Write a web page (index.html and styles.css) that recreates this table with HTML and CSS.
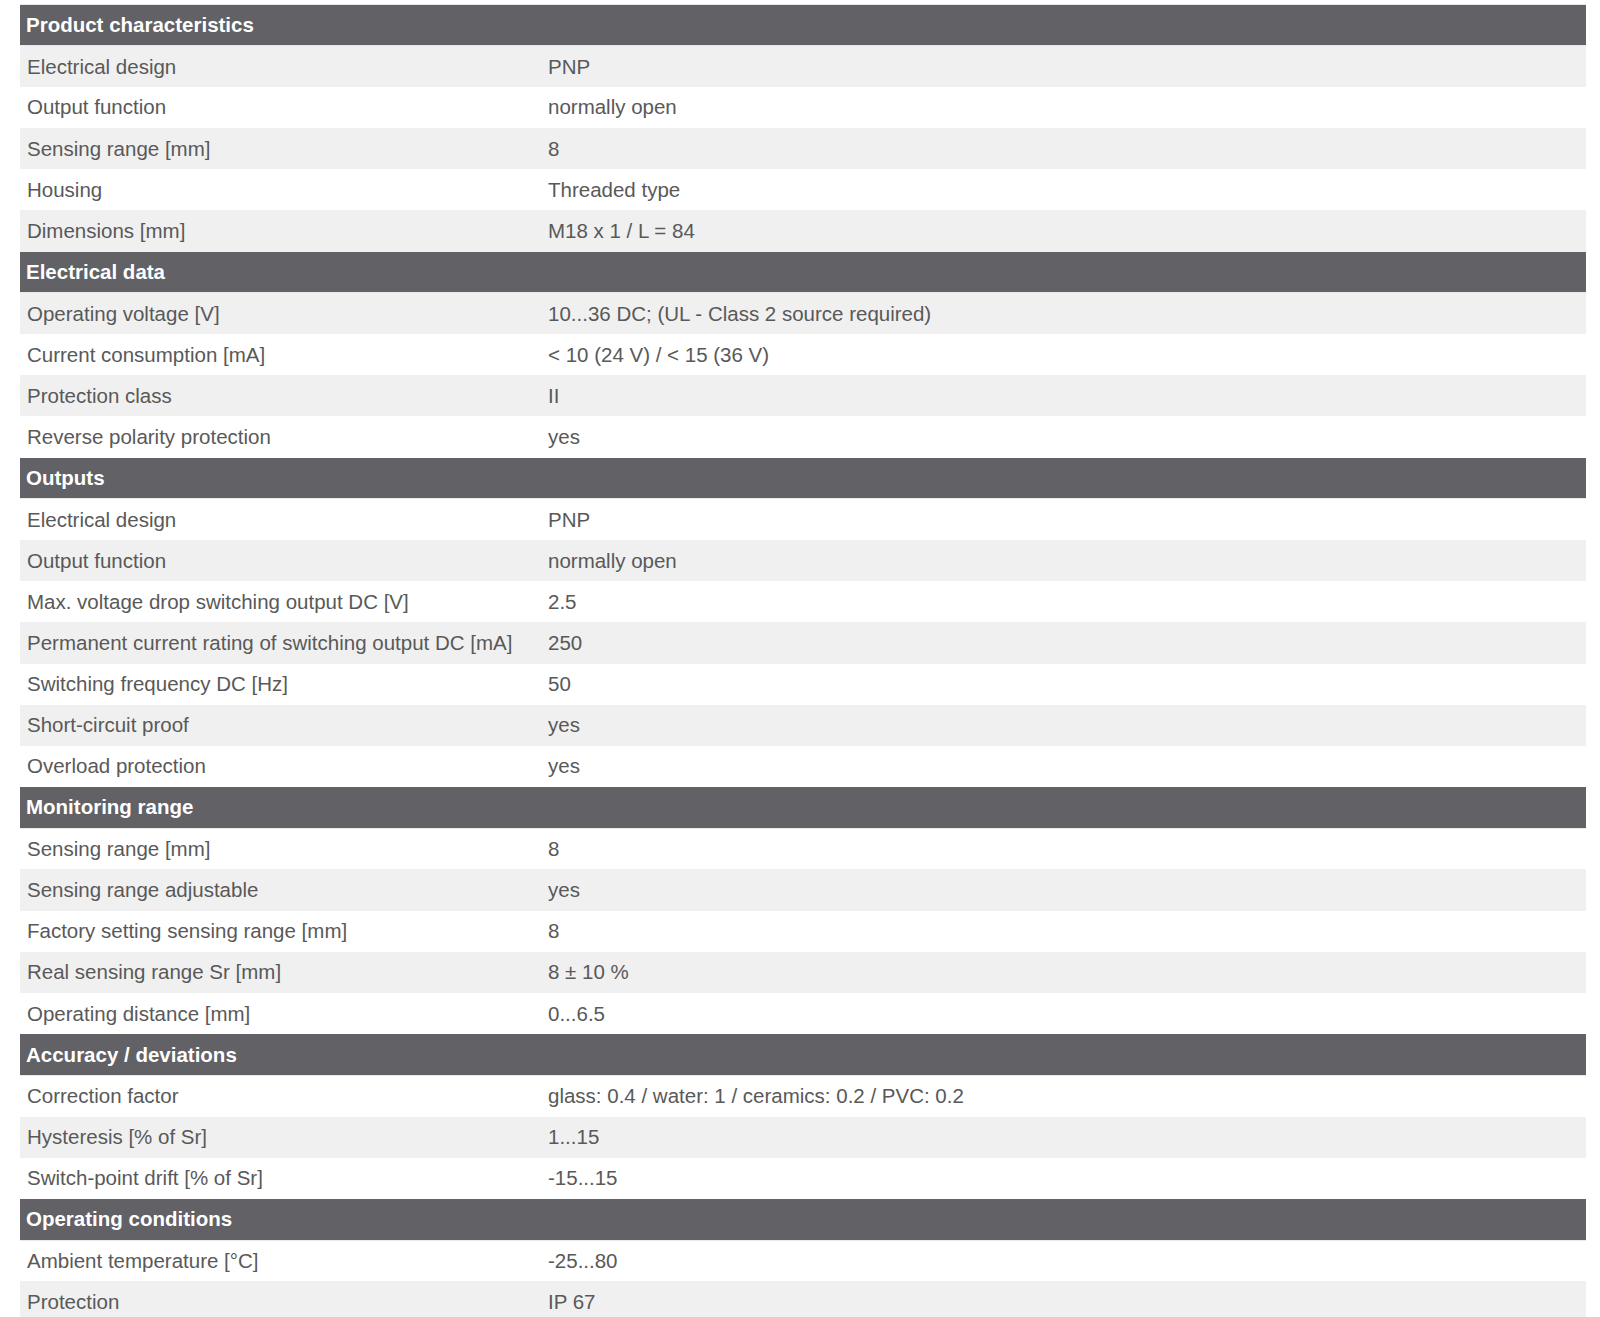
FILE: index.html
```html
<!DOCTYPE html>
<html>
<head>
<meta charset="utf-8">
<link rel="stylesheet" href="styles.css">
</head>
<body>
<table class="spec">
<tbody>
<tr class="group"><th colspan="2">Product characteristics</th></tr>
<tr><td class="k">Electrical design</td><td>PNP</td></tr>
<tr><td class="k">Output function</td><td>normally open</td></tr>
<tr><td class="k">Sensing range [mm]</td><td>8</td></tr>
<tr><td class="k">Housing</td><td>Threaded type</td></tr>
<tr><td class="k">Dimensions [mm]</td><td>M18 x 1 / L = 84</td></tr>
<tr class="group"><th colspan="2">Electrical data</th></tr>
<tr><td class="k">Operating voltage [V]</td><td>10...36 DC; (UL - Class 2 source required)</td></tr>
<tr><td class="k">Current consumption [mA]</td><td>&lt; 10 (24 V) / &lt; 15 (36 V)</td></tr>
<tr><td class="k">Protection class</td><td>II</td></tr>
<tr><td class="k">Reverse polarity protection</td><td>yes</td></tr>
<tr class="group"><th colspan="2">Outputs</th></tr>
<tr><td class="k">Electrical design</td><td>PNP</td></tr>
<tr><td class="k">Output function</td><td>normally open</td></tr>
<tr><td class="k">Max. voltage drop switching output DC [V]</td><td>2.5</td></tr>
<tr><td class="k">Permanent current rating of switching output DC [mA]</td><td>250</td></tr>
<tr><td class="k">Switching frequency DC [Hz]</td><td>50</td></tr>
<tr><td class="k">Short-circuit proof</td><td>yes</td></tr>
<tr><td class="k">Overload protection</td><td>yes</td></tr>
<tr class="group"><th colspan="2">Monitoring range</th></tr>
<tr><td class="k">Sensing range [mm]</td><td>8</td></tr>
<tr><td class="k">Sensing range adjustable</td><td>yes</td></tr>
<tr><td class="k">Factory setting sensing range [mm]</td><td>8</td></tr>
<tr><td class="k">Real sensing range Sr [mm]</td><td>8 ± 10 %</td></tr>
<tr><td class="k">Operating distance [mm]</td><td>0...6.5</td></tr>
<tr class="group"><th colspan="2">Accuracy / deviations</th></tr>
<tr><td class="k">Correction factor</td><td>glass: 0.4 / water: 1 / ceramics: 0.2 / PVC: 0.2</td></tr>
<tr><td class="k">Hysteresis [% of Sr]</td><td>1...15</td></tr>
<tr><td class="k">Switch-point drift [% of Sr]</td><td>-15...15</td></tr>
<tr class="group"><th colspan="2">Operating conditions</th></tr>
<tr><td class="k">Ambient temperature [°C]</td><td>-25...80</td></tr>
<tr><td class="k">Protection</td><td>IP 67</td></tr>
</tbody>
</table>
</body>
</html>
```
FILE: styles.css
```css
html, body {
  margin: 0;
  padding: 0;
  background: #ffffff;
}
body {
  padding: 4px 0 0 20px;
  font-family: "Liberation Sans", Arial, sans-serif;
}
.spec {
  width: 1566px;
  border-collapse: collapse;
  border-top: 1px solid #e8e8ea;
  font-size: 20.5px;
  color: #595959;
}
.spec th,
.spec td {
  padding: 0 6px 0 7px;
  height: 41.2px;
  box-sizing: border-box;
  text-align: left;
  vertical-align: middle;
  white-space: nowrap;
}
.spec td.k {
  width: 521px;
}
.spec tr.group th {
  background: #616166;
  color: #ffffff;
  font-weight: bold;
  border-bottom: 1px solid #e9e9ea;
  padding-left: 6px;
}
.spec tr:nth-child(even) td {
  background: #f0f0f0;
}
```
